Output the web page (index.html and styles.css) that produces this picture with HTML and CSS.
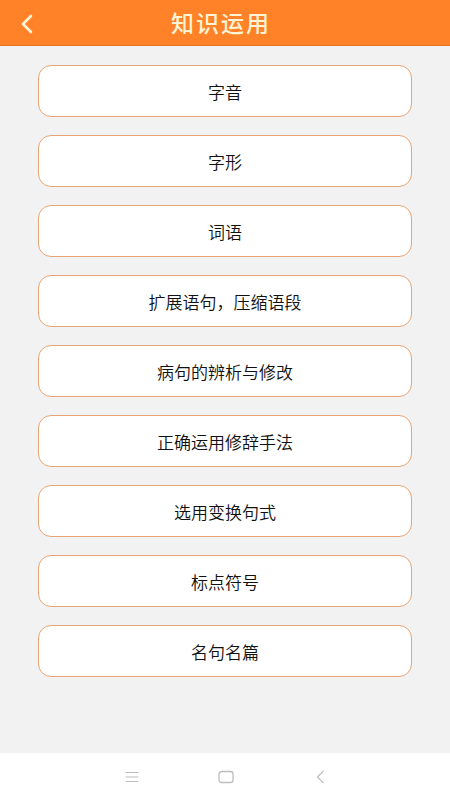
FILE: index.html
```html
<!DOCTYPE html>
<html lang="zh">
<head>
<meta charset="utf-8">
<title>知识运用</title>
<link rel="stylesheet" href="styles.css">
</head>
<body>
<div class="app">
  <header class="header">
    <svg class="back" width="14" height="20" viewBox="0 0 14 20"><path d="M11 2 L3 10 L11 18" fill="none" stroke="#fff3d6" stroke-width="2.6" stroke-linecap="round" stroke-linejoin="round"/></svg>
    <h1 class="title">知识运用</h1>
  </header>
  <main class="list">
    <div class="item">字音</div>
    <div class="item">字形</div>
    <div class="item">词语</div>
    <div class="item">扩展语句，压缩语段</div>
    <div class="item">病句的辨析与修改</div>
    <div class="item">正确运用修辞手法</div>
    <div class="item">选用变换句式</div>
    <div class="item">标点符号</div>
    <div class="item">名句名篇</div>
  </main>
  <nav class="navbar">
    <svg class="nav-icon" width="16" height="14" viewBox="0 0 16 14"><path d="M1.5 2.5H14.5M1.5 7H14.5M1.5 11.5H14.5" stroke="#bdbdbd" stroke-width="1.2"/></svg>
    <svg class="nav-icon" width="16" height="14" viewBox="0 0 16 14"><rect x="1" y="1.5" width="14" height="11" rx="2.5" fill="none" stroke="#bdbdbd" stroke-width="1.3"/></svg>
    <svg class="nav-icon" width="16" height="14" viewBox="0 0 16 14"><path d="M11.5 1 L5.5 7 L11.5 13" fill="none" stroke="#bdbdbd" stroke-width="1.2"/></svg>
  </nav>
</div>
</body>
</html>
```
FILE: styles.css
```css
* { box-sizing: border-box; }
html, body { margin: 0; padding: 0; }
body {
  font-family: "Noto Sans CJK SC", "Noto Sans", sans-serif;
  background: #f2f2f2;
}
.app {
  width: 450px;
  height: 800px;
  display: flex;
  flex-direction: column;
}
.header {
  height: 46px;
  background: #ff8228;
  border-bottom: 1px solid #e9741f;
  position: relative;
  display: flex;
  align-items: center;
  justify-content: center;
  flex-shrink: 0;
}
.back {
  position: absolute;
  left: 20px;
  top: 14px;
}
.title {
  margin: 0;
  font-size: 23px;
  font-weight: 500;
  letter-spacing: 2px;
  color: #fff3d6;
  line-height: 1;
  padding-right: 8px;
}
.list {
  flex: 1;
  padding: 19px 38px 0;
  display: flex;
  flex-direction: column;
  gap: 18px;
}
.item {
  height: 52px;
  background: #fff;
  border: 1px solid #e8a474;
  border-radius: 13px;
  display: flex;
  align-items: center;
  justify-content: center;
  font-size: 17px;
  font-weight: 350;
  color: #111;
}
.navbar {
  height: 47px;
  background: #fff;
  flex-shrink: 0;
  display: flex;
  align-items: center;
  justify-content: center;
  gap: 78px;
  padding-left: 1px;
}
.nav-icon { display: block; }
```
